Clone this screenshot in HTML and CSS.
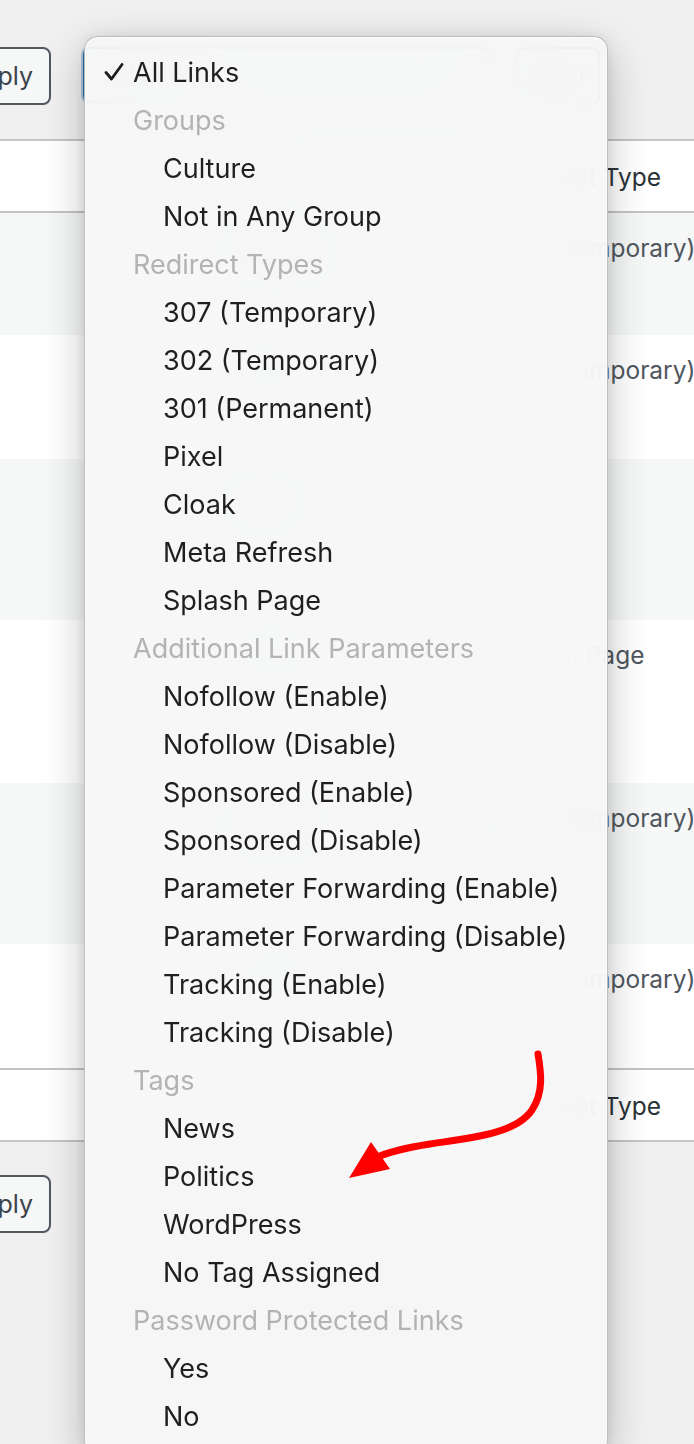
FILE: index.html
```html
<!DOCTYPE html>
<html lang="en">
<head>
<meta charset="utf-8">
<title>Links</title>
<link rel="stylesheet" href="styles.css">
</head>
<body>
<div class="page">
  <div class="tablenav top">
    <button class="btn apply">Apply</button>
    <div class="select-box">All Links</div>
    <button class="btn filter">Filter</button>
  </div>

  <div class="list">
    <div class="row head">
      <span class="c-title">Title</span>
      <span class="c-type">Redirect Type</span>
    </div>
    <div class="row r-short alt">
      <span class="c-title link">Culture</span>
      <span class="c-type">307 (Temporary)</span>
    </div>
    <div class="row r-short2">
      <span class="c-title link">News</span>
      <span class="c-type">307 (Temporary)</span>
    </div>
    <div class="row r-tall alt">
      <span class="c-title link">Pixel</span>
      <span class="c-type">Pixel</span>
    </div>
    <div class="row r-tall2">
      <span class="c-title link">Splash</span>
      <span class="c-type">Splash Page</span>
    </div>
    <div class="row r-tall alt">
      <span class="c-title link">Politics</span>
      <span class="c-type">307 (Temporary)</span>
    </div>
    <div class="row r-short2">
      <span class="c-title link">Events</span>
      <span class="c-type">307 (Temporary)</span>
    </div>
    <div class="row foot">
      <span class="c-title">Title</span>
      <span class="c-type">Redirect Type</span>
    </div>
  </div>

  <div class="tablenav bottom">
    <button class="btn apply">Apply</button>
  </div>
</div>

<div class="menu">
  <div class="mi checked"><svg class="check" viewBox="0 0 20 18" width="20" height="18"><path d="M2 9.5 L7.5 16 L18 1.5" fill="none" stroke="#1d1d1d" stroke-width="2.8" stroke-linecap="round" stroke-linejoin="round"/></svg>All Links</div>
  <div class="mh">Groups</div>
  <div class="mi">Culture</div>
  <div class="mi">Not in Any Group</div>
  <div class="mh">Redirect Types</div>
  <div class="mi">307 (Temporary)</div>
  <div class="mi">302 (Temporary)</div>
  <div class="mi">301 (Permanent)</div>
  <div class="mi">Pixel</div>
  <div class="mi">Cloak</div>
  <div class="mi">Meta Refresh</div>
  <div class="mi">Splash Page</div>
  <div class="mh">Additional Link Parameters</div>
  <div class="mi">Nofollow (Enable)</div>
  <div class="mi">Nofollow (Disable)</div>
  <div class="mi">Sponsored (Enable)</div>
  <div class="mi">Sponsored (Disable)</div>
  <div class="mi">Parameter Forwarding (Enable)</div>
  <div class="mi">Parameter Forwarding (Disable)</div>
  <div class="mi">Tracking (Enable)</div>
  <div class="mi">Tracking (Disable)</div>
  <div class="mh">Tags</div>
  <div class="mi">News</div>
  <div class="mi">Politics</div>
  <div class="mi">WordPress</div>
  <div class="mi">No Tag Assigned</div>
  <div class="mh">Password Protected Links</div>
  <div class="mi">Yes</div>
  <div class="mi">No</div>
</div>

<svg class="arrow" width="694" height="1444" viewBox="0 0 694 1444">
  <path d="M538 1054 C 541 1072, 544 1092, 532 1110 C 516 1134, 470 1138, 430 1144 C 405 1148, 392 1151, 380 1156" fill="none" stroke="#f00" stroke-width="7" stroke-linecap="round"/>
  <polygon points="349,1178 371,1142 390,1169" fill="#f00"/>
</svg>
</body>
</html>
```

FILE: styles.css
```css
html, body {
  margin: 0;
  height: 1444px;
  overflow: hidden;
}
body {
  background: #f0f0f1;
  font-family: Inter, "Noto Sans", "Liberation Sans", sans-serif;
  color: #2c3338;
}
.page {
  width: 694px;
}
.tablenav {
  display: flex;
  align-items: flex-start;
}
.tablenav.top {
  height: 139px;
  padding-top: 47px;
  box-sizing: border-box;
}
.tablenav.bottom {
  padding-top: 33px;
}
.btn {
  font-family: inherit;
  font-size: 25px;
  height: 58px;
  border-radius: 8px;
  background: #f6f7f7;
  border: 2px solid #50575e;
  color: #3c434a;
  padding: 0 20px;
  line-height: 54px;
}
.apply {
  margin-left: -57px;
  width: 108px;
  text-align: right;
  padding-right: 23px;
}
.select-box {
  margin-left: 32px;
  width: 406px;
  height: 56px;
  box-sizing: border-box;
  border: 2px solid #2271b1;
  box-shadow: 0 0 0 2px rgba(34, 113, 177, 0.3);
  border-radius: 8px;
  background: #fff;
  font-size: 25px;
  line-height: 52px;
  padding-left: 20px;
  color: #2c3338;
}
.filter {
  margin-left: 27px;
  width: 84px;
  padding: 0;
  text-align: center;
}
.list {
  background: #fff;
}
.row {
  display: grid;
  grid-template-columns: 501px 1fr;
  font-size: 24.5px;
  line-height: 32px;
  color: #50575e;
  box-sizing: border-box;
  padding-top: 19px;
  background: #fff;
}
.row .c-title {
  padding-left: 235px;
  white-space: nowrap;
}
.row .c-type {
  white-space: nowrap;
}
.row .link {
  color: #2271b1;
}
.row.alt {
  background: #f6f7f7;
}
.row.head, .row.foot {
  border-top: 2px solid #c3c4c7;
  border-bottom: 2px solid #c3c4c7;
  height: 74px;
  padding-top: 20px;
  color: #2c3338;
}
.row.r-short { height: 122px; }
.row.r-short2 { height: 124px; }
.row.r-tall { height: 161px; }
.row.r-tall2 { height: 163px; }

/* dropdown menu overlay */
.menu {
  position: absolute;
  left: 84px;
  top: 36px;
  width: 524px;
  box-sizing: border-box;
  padding: 12px 0 12px;
  border: 1px solid rgba(0, 0, 0, 0.24);
  border-radius: 14px;
  background: rgba(246, 246, 246, 0.93);
  backdrop-filter: blur(28px);
  -webkit-backdrop-filter: blur(28px);
  box-shadow: 0 12px 40px rgba(0, 0, 0, 0.24), 0 0 14px rgba(0, 0, 0, 0.08), inset 0 0 0 1px rgba(255, 255, 255, 0.6);
  font-family: Inter, "Noto Sans", "Liberation Sans", sans-serif;
  font-size: 27px;
}
.mi, .mh {
  height: 48px;
  display: flex;
  align-items: center;
  white-space: nowrap;
  padding-bottom: 2px;
  box-sizing: border-box;
}
.mi {
  padding-left: 78px;
  color: #1f1f1f;
}
.mh {
  padding-left: 48px;
  color: #b3b3b3;
}
.mi.checked {
  padding-left: 19px;
}
.check {
  margin-right: 9px;
}
.arrow {
  position: absolute;
  left: 0;
  top: 0;
  pointer-events: none;
}
```
